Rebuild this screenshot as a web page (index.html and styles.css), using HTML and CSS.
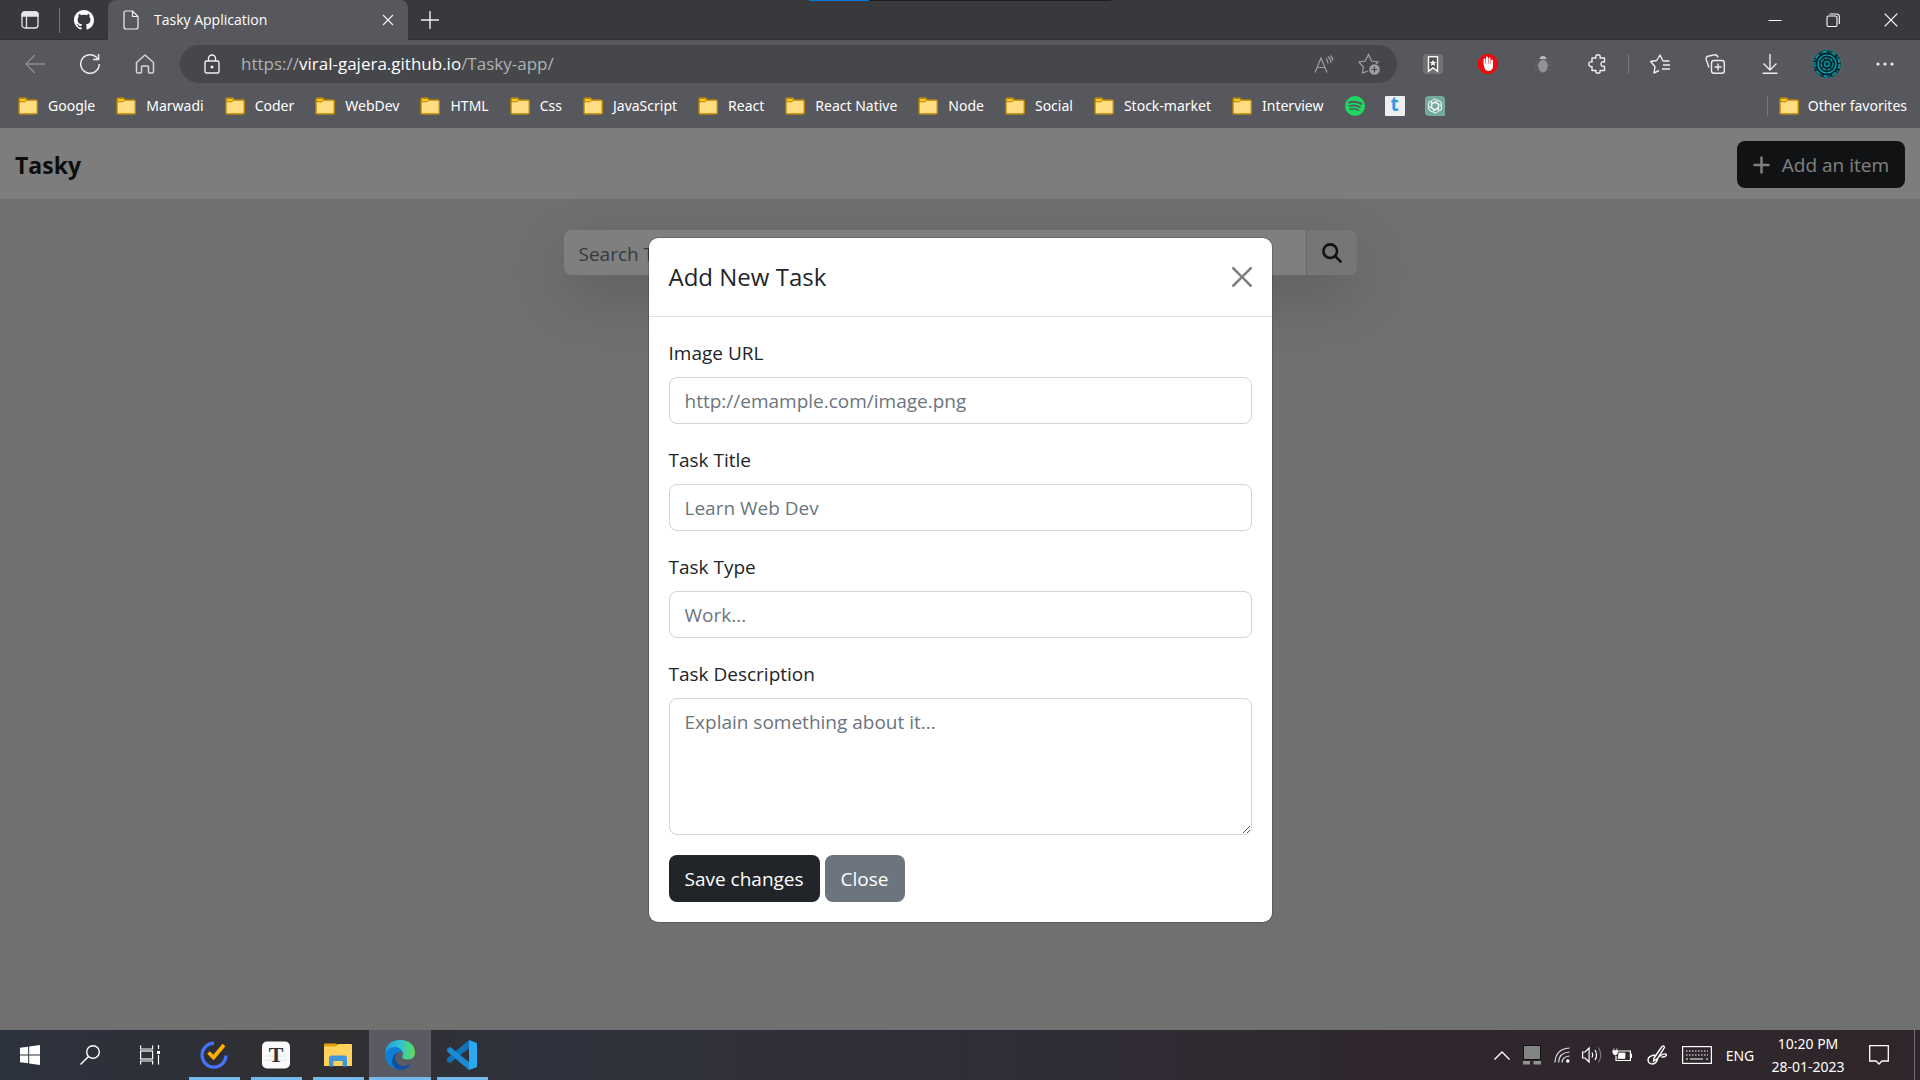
FILE: index.html
```html
<!DOCTYPE html>
<html lang="en">
<head>
<meta charset="utf-8">
<title>Tasky Application</title>
<meta name="viewport" content="width=device-width, initial-scale=1">
<link rel="stylesheet" href="styles.css">
</head>
<body>
<svg class="sprite" aria-hidden="true">
  <symbol id="folder" viewBox="0 0 20 18">
    <path d="M1 2.5Q1 1 2.5 1h5L9.500 3H18q1.300 0 1.300 1.300V15.700q0 1.300-1.300 1.300H2.300Q1 17 1 15.700z" fill="#ffdd80" stroke="#b5850b" stroke-width="1.400"/>
    <path d="M1.500 4.800V2.500q0-1 1-1h5L8.800 3 7 4.800z" fill="#f8c924" stroke="#b5850b" stroke-width="1"/>
  </symbol>
</svg>

<header class="browser">
  <div class="recorder"><span class="recorder-progress"></span></div>
  <div class="tab-strip">
    <button class="strip-button" aria-label="Tab actions"><svg width="20" height="20" viewBox="0 0 20 20" fill="none" stroke="#e6e6e6" stroke-width="1.300"><rect x="2" y="2" width="16" height="16" rx="3"/><path d="M2 6V4.500Q2 2 4.500 2h11Q18 2 18 4.500V6z" fill="#e6e6e6"/><path d="M6.500 6v12"/></svg></button>
    <span class="divider"></span>
    <button class="strip-button" aria-label="GitHub"><svg width="20" height="20" viewBox="0 0 16 16" fill="#fff"><path d="M8 0C3.580 0 0 3.580 0 8c0 3.540 2.290 6.530 5.470 7.590.4.070.55-.17.55-.38 0-.19-.01-.82-.01-1.490-2.010.37-2.530-.49-2.690-.94-.09-.23-.48-.94-.82-1.130-.28-.15-.68-.52-.01-.53.63-.01 1.080.58 1.230.82.720 1.210 1.870.87 2.330.66.070-.52.28-.87.51-1.070-1.780-.2-3.640-.89-3.640-3.950 0-.87.310-1.590.82-2.150-.08-.2-.36-1.020.08-2.120 0 0 .67-.21 2.200.82.64-.18 1.320-.27 2-.27s1.360.09 2 .27c1.530-1.040 2.200-.82 2.200-.82.440 1.100.160 1.920.080 2.120.51.560.82 1.270.82 2.150 0 3.070-1.870 3.750-3.650 3.950.290.250.540.730.540 1.480 0 1.070-.010 1.930-.010 2.200 0 .210.150.460.550.380A8.010 8.010 0 0 0 16 8c0-4.420-3.580-8-8-8"/></svg></button>
    <div class="tab">
      <svg width="16" height="20" viewBox="0 0 16 20" fill="none" stroke="#f0f0f0" stroke-width="1.200"><path d="M1 3q0-2 2-2h6.500L15 6.500V17q0 2-2 2H3q-2 0-2-2zM9.500 1v5.500H15"/></svg>
      <span class="tab-title">Tasky Application</span>
      <button class="icon-button small" aria-label="Close tab"><svg width="12" height="12" viewBox="0 0 12 12" stroke="#f0f0f0" stroke-width="1.200"><path d="m1 1 10 10M11 1 1 11"/></svg></button>
    </div>
    <button class="strip-button new-tab" aria-label="New tab"><svg width="18" height="18" viewBox="0 0 18 18" stroke="#f0f0f0" stroke-width="1.400"><path d="M9 0v18M0 9h18"/></svg></button>
    <div class="window-controls">
      <button aria-label="Minimize"><svg width="14" height="14" viewBox="0 0 14 14" stroke="#fff" stroke-width="1"><path d="M.5 7.500h13"/></svg></button>
      <button aria-label="Restore"><svg width="14" height="14" viewBox="0 0 14 14" stroke="#fff" stroke-width="1.100" fill="none"><rect x="1" y="3" width="10" height="10.500" rx="1.500"/><path d="M3.500 1h7Q13.300 1 13.300 3.500V11"/></svg></button>
      <button aria-label="Close window"><svg width="14" height="14" viewBox="0 0 14 14" stroke="#fff" stroke-width="1.200"><path d="m.7.700 12.600 12.600M13.300.7.700 13.300"/></svg></button>
    </div>
  </div>

  <div class="toolbar">
    <div class="tool-group">
      <button class="icon-button" aria-label="Back"><svg width="22" height="20" viewBox="0 0 22 20" fill="none" stroke="#8c8d91" stroke-width="1.400"><path d="M21 10H2M11 1 2 10l9 9"/></svg></button>
      <button class="icon-button" aria-label="Refresh"><svg width="22" height="22" viewBox="0 0 22 22" fill="none" stroke="#ededed" stroke-width="1.500"><path d="M19 6.200A9.300 9.300 0 1 0 20.300 11M19.600 1v5.600H14"/></svg></button>
      <button class="icon-button" aria-label="Home"><svg width="20" height="20" viewBox="0 0 20 20" fill="none" stroke="#d6d6d6" stroke-width="1.500" stroke-linejoin="round"><path d="M1.500 8.500 10 1l8.500 7.500V17.500q0 1.500-1.500 1.500h-2.500q-1 0-1-1V13q0-1-1-1h-5q-1 0-1 1v5q0 1-1 1H3q-1.500 0-1.500-1.500z"/></svg></button>
    </div>
    <div class="address">
      <svg class="lock" width="16" height="20" viewBox="0 0 16 20" fill="none" stroke="#f0f0f0" stroke-width="1.400"><rect x="1" y="7" width="14" height="12" rx="1.500"/><path d="M4.500 7V4.500a3.500 3.500 0 0 1 7 0V7"/><circle cx="8" cy="13" r=".8" fill="#f0f0f0"/></svg>
      <div class="url">https://<strong>viral-gajera.github.io</strong>/Tasky-app/</div>
      <button class="icon-button" aria-label="Read aloud"><svg width="20" height="18" viewBox="0 0 20 18" fill="none" stroke="#a0a0a3" stroke-width="1.200"><path d="M1 17.500 7 3l6 14.500M3 12.500h8M12 3.500q2 2 2 5M14 1.500q3 2.500 3 6.500M16.500.5q2.500 3 2.500 5"/></svg></button>
      <button class="icon-button" aria-label="Add to favorites"><svg width="22" height="22" viewBox="0 0 22 22" fill="none" stroke="#a0a0a3" stroke-width="1.200"><path d="M10 18 4.500 20l.8-6L1 9l6.300-1L10.500 1.500 13.500 8l6.500 1-2 2"/><circle cx="16.500" cy="16.500" r="5.300" fill="#a0a0a3" stroke="none"/><path d="M16.500 13.500v6M13.500 16.500h6" stroke="#46474b"/></svg></button>
    </div>
    <div class="tool-group">
      <button class="icon-button" aria-label="Bookmarks extension"><svg width="20" height="20" viewBox="0 0 20 20"><rect width="20" height="20" rx="3" fill="#717171"/><path d="M5.500 2.700h9v14.600L10 13.800l-4.500 3.500z" fill="#4a4a4a" stroke="#f4f4f4" stroke-width="1.500"/><path d="m10 5.500 1 2.200 2.400.2-1.800 1.600.6 2.400L10 10.700l-2.200 1.200.6-2.400-1.800-1.600 2.400-.2z" fill="#f4f4f4"/></svg></button>
      <button class="icon-button" aria-label="Ad blocker"><svg width="20" height="20" viewBox="0 0 20 20"><path d="M6 0h8l6 6v8l-6 6H6l-6-6V6z" fill="#e80c10"/><path d="M6.500 10V5.500M9 9V3.500M11.500 9V4.500M14 11V6.500" stroke="#fff" stroke-width="2" stroke-linecap="round"/><path d="M5.500 9.500h9.500v3.500q-1 4-4.500 4-3 0-4-3z" fill="#fff"/></svg></button>
      <button class="icon-button" aria-label="Debug extension"><svg width="20" height="20" viewBox="0 0 20 20"><path d="M2 8h3M1 11h4M2 16h3M18 8h-3M19 11h-4M18 16h-3" stroke="#68696c" stroke-width="1"/><path d="M6.500 5Q7 2 10 2t3.500 3z" fill="#bbb"/><ellipse cx="10" cy="12" rx="4.800" ry="6.500" fill="#929292"/></svg></button>
      <button class="icon-button" aria-label="Extensions"><svg width="20" height="20" viewBox="0 0 20 20" fill="none" stroke="#ededed" stroke-width="1.400" stroke-linejoin="round"><path d="M4 4h4q-1-3.200 2-3.200T12 4h4.500v4q-3.500-1-3.500 2t3.500 2.200V16.500H12q.8 2.700-2 2.700t-2-2.700H4V12.500q-3.200.5-3.200-2.300T4 8z"/></svg></button>
    </div>
    <span class="divider tool-divider"></span>
    <div class="tool-group">
      <button class="icon-button" aria-label="Favorites"><svg width="20" height="20" viewBox="0 0 20 20" fill="none" stroke="#ededed" stroke-width="1.400" stroke-linejoin="round"><path d="M9 16.500 4 19l1-6.500-4.500-5 6.200-1L10 1l3 6h6.500M13 11h7M12 15h8"/></svg></button>
      <button class="icon-button" aria-label="Collections"><svg width="20" height="20" viewBox="0 0 20 20" fill="none" stroke="#ededed" stroke-width="1.400"><rect x="6.500" y="6.500" width="12.800" height="12.800" rx="2.500"/><path d="M13 9.500v7M9.500 13h7M4 13.500 1.200 5.500Q.5 3 3 2.200L9 .9Q12 .2 13 3.500"/></svg></button>
      <button class="icon-button" aria-label="Downloads"><svg width="16" height="20" viewBox="0 0 16 20" fill="none" stroke="#ededed" stroke-width="1.400"><path d="M8 0v16M1.500 9.500 8 16l6.500-6.500M.5 19.300h15"/></svg></button>
      <button class="icon-button profile" aria-label="Profile"><svg width="30" height="30" viewBox="0 0 30 30" fill="none"><circle cx="15" cy="15" r="14.500" fill="#06262e" stroke="#557276"/><g stroke="#0b8d9c"><circle cx="15" cy="15" r="12.500" stroke-width="2" stroke-dasharray="5 2 1 1"/><circle cx="15" cy="15" r="9" stroke="#14b3c4" stroke-width="1.200"/><circle cx="15" cy="15" r="6" stroke-width="1.500" stroke-dasharray="4 1"/><circle cx="15" cy="15" r="2.500" stroke-width="1.500"/></g></svg></button>
      <button class="icon-button" aria-label="More"><svg width="18" height="4" viewBox="0 0 18 4" fill="#f0f0f0"><circle cx="2" cy="2" r="1.600"/><circle cx="9" cy="2" r="1.600"/><circle cx="16" cy="2" r="1.600"/></svg></button>
    </div>
  </div>

  <nav class="favorites" aria-label="Favorites bar">
    <a class="named" href="#"><svg class="folder"><use href="#folder"/></svg>Google</a>
    <a class="named" href="#"><svg class="folder"><use href="#folder"/></svg>Marwadi</a>
    <a class="named" href="#"><svg class="folder"><use href="#folder"/></svg>Coder</a>
    <a class="named" href="#"><svg class="folder"><use href="#folder"/></svg>WebDev</a>
    <a class="named" href="#"><svg class="folder"><use href="#folder"/></svg>HTML</a>
    <a class="named" href="#"><svg class="folder"><use href="#folder"/></svg>Css</a>
    <a class="named" href="#"><svg class="folder"><use href="#folder"/></svg>JavaScript</a>
    <a class="named" href="#"><svg class="folder"><use href="#folder"/></svg>React</a>
    <a class="named" href="#"><svg class="folder"><use href="#folder"/></svg>React Native</a>
    <a class="named" href="#"><svg class="folder"><use href="#folder"/></svg>Node</a>
    <a class="named" href="#"><svg class="folder"><use href="#folder"/></svg>Social</a>
    <a class="named" href="#"><svg class="folder"><use href="#folder"/></svg>Stock-market</a>
    <a class="named" href="#"><svg class="folder"><use href="#folder"/></svg>Interview</a>
    <a href="#" aria-label="Spotify"><svg width="20" height="20" viewBox="0 0 20 20" fill="none" stroke="#57585d" stroke-linecap="round"><circle cx="10" cy="10" r="10" fill="#1ed760" stroke="none"/><path d="M4 6.500q6.500-1.800 12.300 1.300" stroke-width="2"/><path d="M4.500 10q5.500-1.500 10.500 1.200" stroke-width="1.700"/><path d="M5 13.200q4.700-1.200 8.700 1" stroke-width="1.400"/></svg></a>
    <a href="#" aria-label="Typing"><span class="tile">t</span></a>
    <a href="#" aria-label="ChatGPT"><svg width="20" height="20" viewBox="0 0 20 20" fill="none" stroke="#fff" stroke-width=".9"><path d="M4 0h12q4 0 4 4v16H4q-4 0-4-4V4q0-4 4-4z" fill="#74aa9c" stroke="none"/><path id="petal" d="M12.500 4.200Q10.500 2.200 8 3.500 6.200 4.700 6.300 7v4.500l3.700 2.100"/><use href="#petal" transform="rotate(60 10 10)"/><use href="#petal" transform="rotate(120 10 10)"/><use href="#petal" transform="rotate(180 10 10)"/><use href="#petal" transform="rotate(240 10 10)"/><use href="#petal" transform="rotate(300 10 10)"/></svg></a>
    <span class="divider other-divider"></span>
    <a href="#"><svg class="folder"><use href="#folder"/></svg>Other favorites</a>
  </nav>
</header>

<main class="page">
  <div class="navbar">
    <a class="brand" href="#">Tasky</a>
    <button class="btn btn-dark add-item"><svg width="17" height="18" viewBox="0 0 17 18" stroke="#fff" stroke-width="2.500" stroke-linecap="round"><path d="M8.500 1.500v15M1.500 9h14"/></svg>Add an item</button>
  </div>
  <div class="search">
    <input type="search" aria-label="Search Task" placeholder="Search Task...">
    <button aria-label="Search"><svg width="20" height="20" viewBox="0 0 20 20" fill="none" stroke="#212529" stroke-width="2.600" stroke-linecap="round"><circle cx="8.200" cy="8.200" r="6.800"/><path d="m13.200 13.200 5.300 5.300"/></svg></button>
  </div>

  <div class="backdrop">
    <section class="modal" role="dialog" aria-labelledby="modal-title">
      <div class="modal-header">
        <h1 id="modal-title">Add New Task</h1>
        <button class="modal-close" aria-label="Close"><svg width="20" height="20" viewBox="0 0 16 16" fill="#7f7f7f"><path d="M.293.293a1 1 0 0 1 1.414 0L8 6.586 14.293.293a1 1 0 1 1 1.414 1.414L9.414 8l6.293 6.293a1 1 0 0 1-1.414 1.414L8 9.414l-6.293 6.293a1 1 0 0 1-1.414-1.414L6.586 8 .293 1.707a1 1 0 0 1 0-1.414"/></svg></button>
      </div>
      <form class="modal-body">
        <div class="field">
          <label for="image-url">Image URL</label>
          <input id="image-url" type="text" placeholder="http://emample.com/image.png">
        </div>
        <div class="field">
          <label for="task-title">Task Title</label>
          <input id="task-title" type="text" placeholder="Learn Web Dev">
        </div>
        <div class="field">
          <label for="task-type">Task Type</label>
          <input id="task-type" type="text" placeholder="Work...">
        </div>
        <div class="field">
          <label for="task-description">Task Description</label>
          <textarea id="task-description" rows="4" placeholder="Explain something about it..."></textarea>
        </div>
        <div class="actions">
          <button class="btn btn-dark" type="button">Save changes</button>
          <button class="btn btn-secondary" type="button">Close</button>
        </div>
      </form>
    </section>
  </div>
</main>

<footer class="taskbar">
  <button class="system" aria-label="Start"><svg width="20" height="20" viewBox="0 0 20 20" fill="#fff"><path d="M0 2.800 8.200 1.700v7.800H0zM9.200 1.500 20 0v9.500H9.200zM0 10.500h8.200v7.800L0 17.200zM9.200 10.500H20V20L9.200 18.500z"/></svg></button>
  <button class="system" aria-label="Search Windows"><svg width="20" height="20" viewBox="0 0 20 20" fill="none" stroke="#fff" stroke-width="1.400"><circle cx="13" cy="7" r="6.300"/><path d="M8.500 11.500.5 19.500"/></svg></button>
  <button class="system" aria-label="Task view"><svg width="20" height="20" viewBox="0 0 20 20" fill="none" stroke="#fff" stroke-width="1.200"><path d="M.6.500v3.500h12V.5M.6 19.500V16h12v3.500M18.500 0v4M18.500 10v9.500"/><rect x=".6" y="6" width="12" height="8"/><path d="M17 6h3v3h-3z" fill="#fff" stroke="none"/></svg></button>
  <div class="apps">
    <button class="app" aria-label="TickTick"><svg width="28" height="28" viewBox="0 0 28 28" fill="none"><path d="M14 2.200A12 12 0 1 0 26 14.500" stroke="#4772fa" stroke-width="3.200"/><path d="m8.500 11.500 5 5L24 4" stroke="#ffb000" stroke-width="3.800"/></svg></button>
    <button class="app" aria-label="Typora"><svg width="30" height="28" viewBox="0 0 30 28"><rect x="1" y=".5" width="28" height="27" rx="5" fill="#fafafa"/><path d="M4 15h22M4 19h22" stroke="#e4e4e4"/><text class="typora" x="15" y="21" text-anchor="middle">T</text></svg></button>
    <button class="app" aria-label="File Explorer"><svg width="28" height="24" viewBox="0 0 28 24"><path d="M0 1.500Q0 .5 1 .5h11.500l1.500 4H0z" fill="#e3a008"/><path d="M0 3.500h12l2-2.500h13q1 0 1 1v21H0z" fill="#ffd25e"/><path d="M5 23.500V15q0-2.500 2.500-2.500h13Q23 12.500 23 15v8.500h-4.500V18h-9v5.500z" fill="#3f96d8"/></svg></button>
    <button class="app active" aria-label="Microsoft Edge"><svg width="30" height="30" viewBox="0 0 30 30"><defs><linearGradient id="edge-top"><stop offset="0" stop-color="#269be0"/><stop offset=".5" stop-color="#2fc3d0"/><stop offset="1" stop-color="#62dc57"/></linearGradient></defs><path d="M0 14Q1 0 15.500 0 29 .5 30 12.500q0 6.500-7 7-7 .2-5.500-4 1.500-3-1.500-5.500Q8 6 0 14" fill="url(#edge-top)"/><path d="M0 14Q3 7 10.500 7q6 .5 7 5.500-6-2-8 3.500-2 8 8 13-3 1.500-6 .5Q.5 26 0 14" fill="#0d7fd4"/><path d="M13 12.500q-6 5 0 11.500 7 5 14-1-4 6.500-12 7-7.500-1-8-9 .5-6.500 6-8.500" fill="#114fa0"/></svg></button>
    <button class="app" aria-label="Visual Studio Code"><svg width="30" height="30" viewBox="0 0 30 30"><path d="M22 0 9.500 12 3 7 0 8.500v3L6 15" fill="#0f78c0"/><path d="M0 18.500 22 0v8.500L3 23 0 21.500z" fill="#1272b8"/><path d="M0 11.500 3 7l19 15v8L0 11.500" fill="#1a8ad4"/><path d="m22 0 8 3v24l-8 3z" fill="#2aa8f2"/></svg></button>
  </div>
  <div class="tray">
    <button class="tray-item" aria-label="Show hidden icons"><svg width="16" height="9" viewBox="0 0 16 9" fill="none" stroke="#fff" stroke-width="1.400"><path d="m.5 8.500 7.500-7.500 7.500 7.500"/></svg></button>
    <button class="tray-item" aria-label="Touchpad"><svg width="18" height="20" viewBox="0 0 18 20"><path d="M.5.5h17v14H.5z" fill="#848484" stroke="#101010"/><path d="M0 16h7v3.500H0zM10.500 16H18v3.500h-7.500z" fill="#929292"/></svg></button>
    <button class="tray-item" aria-label="Network"><svg width="16" height="16" viewBox="0 0 16 16" fill="none" stroke="#ddd" stroke-width="1.200"><path d="M1 15.500Q1.500 2 15.500 1M4.500 15.500Q5 5.500 15.500 5M8 15.500Q8.500 9.500 15.500 9"/><circle cx="13.800" cy="14" r="1.700" fill="#fff" stroke="none"/></svg></button>
    <button class="tray-item" aria-label="Volume"><svg width="20" height="18" viewBox="0 0 20 18" fill="none" stroke="#fff" stroke-width="1.200"><path d="M.6 6h2.500l4-4v14l-4-4H.6zM10 6.500q1.500 2.500 0 5M13 4q3 5 0 10"/><path d="M16.500 1.500q4.500 7.500 0 15" stroke="#777"/></svg></button>
    <button class="tray-item" aria-label="Battery"><svg width="20" height="14" viewBox="0 0 20 14" fill="none" stroke="#fff" stroke-width="1.200"><path d="M6 3h12.400v9.500H4V8"/><path d="M7 5h6v5.500H6zM18.500 6H20v3.500h-1.500zM.8 2.500h5v2Q5 7 3.300 7T.8 4.500zM1.800.3v2M4.800.3v2" fill="#fff" stroke-width=".7"/></svg></button>
    <button class="tray-item wide" aria-label="Pen"><svg width="20" height="20" viewBox="0 0 20 20" fill="none" stroke="#fff" stroke-width="1.400"><path d="M7 13 15 1.500q2-1.500 2.500.8L10.500 13.500 6.500 16zM8 10q-7 1-7 5 .5 4 4.500 4T11 12.500q6-5 8.500-3-.5 3-5 2.500"/></svg></button>
    <button class="tray-item wide" aria-label="Touch keyboard"><svg width="30" height="18" viewBox="0 0 30 18" fill="none" stroke="#fff" stroke-width="1.200"><rect x=".6" y=".6" width="28.800" height="16.800"/><path d="M4 5h22M4 9h22" stroke-dasharray="1.500 1.500"/><path d="M4 13h2M8 13h13M24 13h2"/></svg></button>
    <button class="tray-item language">ENG</button>
    <button class="tray-item clock"><span>10:20 PM</span><span>28-01-2023</span></button>
    <button class="tray-item notifications" aria-label="Notifications"><svg width="20" height="20" viewBox="0 0 20 20" fill="none" stroke="#fff" stroke-width="1.300"><path d="M.7.700h18.600V16H13l-3 3-3-3H.7z"/></svg></button>
    <button class="show-desktop" aria-label="Show desktop"></button>
  </div>
</footer>
</body>
</html>
```
FILE: styles.css
```css
* { box-sizing: border-box; }

body {
  margin: 0;
  min-height: 100vh;
  display: flex;
  flex-direction: column;
  font-family: "Open Sans", "Noto Sans", sans-serif;
  font-size: 19px;
  line-height: 30px;
  color: #212529;
}

button, input, textarea { font: inherit; color: inherit; margin: 0; }
button { border: 0; padding: 0; background: none; display: flex; align-items: center; justify-content: center; }
a { color: inherit; text-decoration: none; }
svg { display: block; flex: none; }
.sprite { position: absolute; width: 0; height: 0; }

/* Browser chrome */
.browser { background: #57585d; color: #fff; font-size: 14px; line-height: 20px; position: relative; }
.recorder { position: absolute; top: 0; left: 50%; width: 302px; height: 1px; margin-left: -151px; background: #1d1d1d; }
.recorder-progress { display: block; width: 60px; height: 1px; background: #0078d7; }
.divider { width: 1px; background: #77787c; flex: none; }

.tab-strip { display: flex; align-items: center; height: 40px; background: #38393c; box-shadow: inset 0 -1px #303134; }
.tab-strip .divider { height: 25px; }
.strip-button { width: 48px; height: 40px; flex: none; }
.strip-button:first-child { width: 59px; }
.new-tab { width: 43px; }
.tab { display: flex; align-items: center; gap: 15px; width: 300px; height: 40px; padding: 0 11px 0 15px; background: #57585d; border-radius: 8px 8px 0 0; }
.tab-title { flex: 1; }
.window-controls { display: flex; margin-left: auto; }
.window-controls button { width: 58px; height: 38px; }

.toolbar { display: flex; align-items: center; gap: 18px; height: 48px; padding: 0 18px 0 17px; }
.tool-group { display: flex; align-items: center; gap: 20px; }
.icon-button { width: 35px; height: 35px; flex: none; }
.icon-button.small { width: 18px; }
.icon-button.profile { width: 40px; }
.tool-divider { height: 20px; margin: 0 -5px; }
.address { flex: 1; display: flex; align-items: center; gap: 10px; height: 38px; padding: 0 11px 0 24px; border-radius: 19px; background: #46474b; }
.lock { margin-right: 11px; }
.url { flex: 1; font-size: 17px; color: #b1b1b4; }
.url strong { font-weight: 400; color: #fff; }

.favorites { display: flex; align-items: center; gap: 20px; height: 40px; padding: 0 13px 5px 18px; font-family: "Noto Sans", sans-serif; }
.favorites a { display: flex; align-items: center; gap: 9px; white-space: nowrap; }
.favorites .named { gap: 10px; padding-right: 1px; }
.folder { width: 20px; height: 18px; }
.tile { width: 20px; height: 20px; border-radius: 1px; background: #eee; color: #2e9be6; font-size: 19px; font-weight: 700; line-height: 16px; text-align: center; }
.other-divider { height: 20px; margin: 0 -9px 0 auto; }

/* Application page */
.page { flex: 1; position: relative; background: #e0e0e0; }
.navbar { display: flex; align-items: center; justify-content: space-between; height: 71px; padding: 2px 15px 0; background: #f8fbf8; }
.brand { font-size: 23px; font-weight: 700; color: #1b1b1b; }

.btn { height: 47px; padding: 0 16px; border-radius: 8px; color: #fff; }
.btn-dark { background: #212529; }
.btn-secondary { background: #6c757d; }
.add-item { gap: 12px; }

.search { position: relative; display: flex; width: 793px; max-width: 100%; height: 45px; margin: 31px auto 0; border-radius: 8px; box-shadow: 0 20px 60px rgba(0, 0, 0, .175); }
.search input { flex: 1; min-width: 0; padding: 2px 15px 0; border: 0; border-radius: 8px 0 0 8px; background: #fff; }
.search button { width: 51px; border-left: 1px solid #ced4da; border-radius: 0 8px 8px 0; background: #e9ecef; }
::placeholder { color: #6c757d; opacity: 1; }

.backdrop { position: absolute; inset: 0; padding: 109px 20px 0; background: rgba(0, 0, 0, .5); }
.modal { width: 625px; max-width: 100%; margin: 0 auto; background: #fff; background-clip: padding-box; border: 1px solid rgba(0, 0, 0, .175); border-radius: 10px; }
.modal-header { display: flex; align-items: center; justify-content: space-between; padding: 20px; border-bottom: 1px solid #dee2e6; }
.modal-header h1 { margin: 0; font-size: 24px; font-weight: 500; line-height: 38px; }
.modal-body { display: flex; flex-direction: column; gap: 20px; padding: 20px; }
.field { display: flex; flex-direction: column; gap: 8px; }
.field label { line-height: 32px; }
.field input, .field textarea { width: 100%; padding: 0 15px; border: 1px solid #ced4da; border-radius: 8px; background: #fff; }
.field input { height: 47px; }
.field textarea { display: block; height: 137px; padding: 8px 15px; resize: vertical; }
.actions { display: flex; gap: 5px; }

/* Windows taskbar */
.taskbar { display: flex; height: 50px; background: linear-gradient(90deg, #2c323e, #302e31 18%, #2f323c 27%, #2f2e38 50%, #30262d 75%, #2f262c); color: #fff; font-family: "Noto Sans", sans-serif; font-size: 14px; line-height: 23px; }
.system { width: 60px; }
.apps { display: flex; margin-left: 3px; }
.app { position: relative; width: 62px; }
.app::after { content: ""; position: absolute; bottom: 0; left: 6px; right: 5px; height: 3px; background: #76b9ed; }
.app.active { background: #5a5a62; }
.app.active::after { left: 0; right: 0; }
.typora { font-family: "Liberation Serif", serif; font-size: 22px; font-weight: 700; fill: #333; }
.tray { display: flex; margin-left: auto; }
.tray-item { width: 30px; }
.tray-item.wide { width: 40px; }
.tray-item.language { width: 46px; }
.tray-item.clock { width: 90px; flex-direction: column; }
.tray-item.notifications { width: 52px; margin-right: 9px; }
.show-desktop { width: 6px; border-left: 1px solid #777078; }
```
